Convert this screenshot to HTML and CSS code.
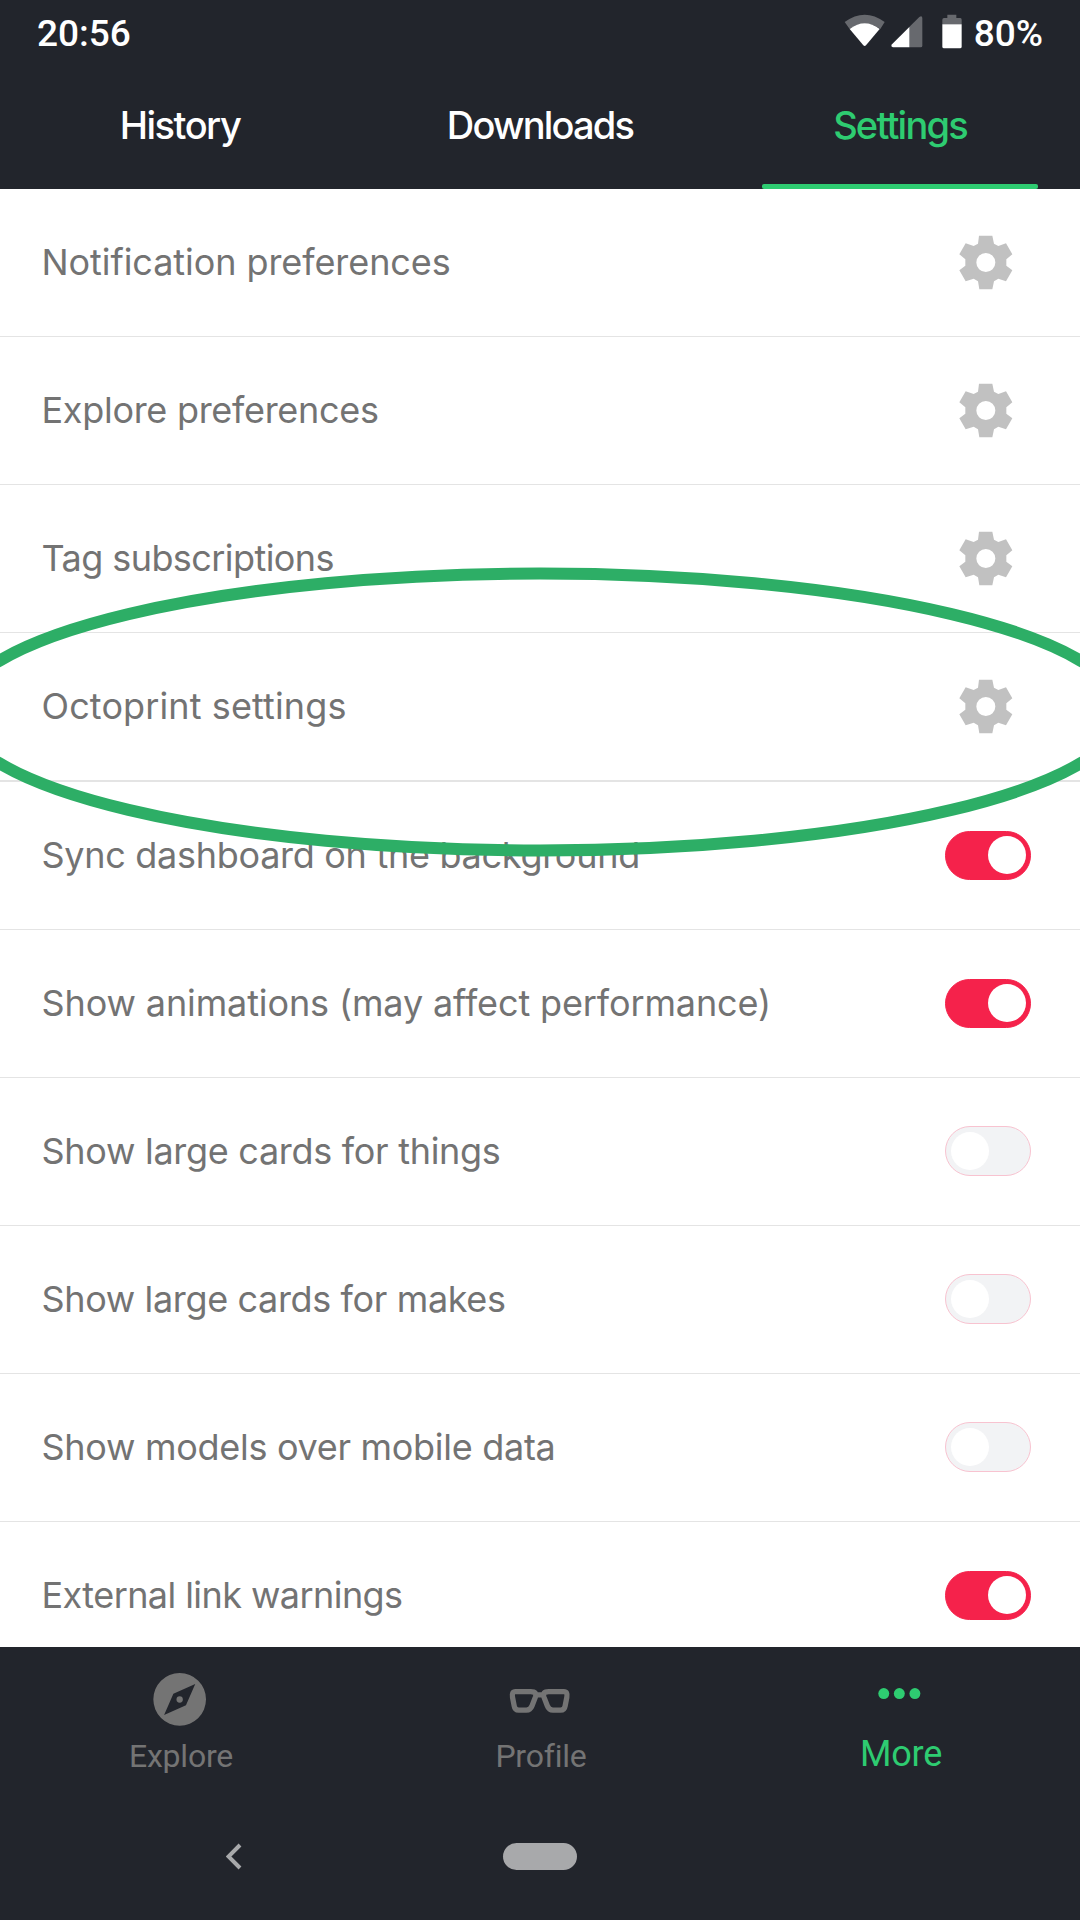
FILE: index.html
```html
<!DOCTYPE html>
<html lang="en">
<head>
<meta charset="utf-8">
<title>Settings</title>
<link rel="stylesheet" href="styles.css">
</head>
<body>
<svg class="defs" aria-hidden="true">
  <symbol id="gear" viewBox="0 0 162 165">
    <path fill-rule="evenodd" d="M60 2h40l5 24 13 7 23-8 19 33-18 15v19l18 14-19 33-23-8-13 8-5 24H61l-4-24-13-8-24 8-19-33 18-14V73L1 58l19-33 24 8 13-7zM80.500 54a28.500 28.500 0 1 0 0 57a28.500 28.500 0 1 0 0-57z"/>
  </symbol>
</svg>
<div class="screen">
  <header class="top">
    <div class="status">
      <span class="clock">20:56</span>
      <svg class="status-icons" viewBox="0 0 360 105">
        <path fill="#67696e" d="M2 24Q62-20 122 24L109 45Q62 12 17 45z"/>
        <path fill="#fff" d="M17 45Q62 10 107 45L66 94q-4 4-8 0z"/>
        <path fill="#67696e" d="M195 40l31-31q8-6 9 3v83q0 5-5 5h-35z"/>
        <path fill="#fff" d="M196 39v61h-49q-8-2-3-9z"/>
        <path fill="#67696e" d="M310 2h27v10h12q4 0 4 5v14h-58V17q0-5 5-5h10z"/>
        <path fill="#fff" d="M295 31h58v67q0 5-5 5h-48q-5 0-5-5z"/>
      </svg>
      <span class="battery">80%</span>
    </div>
    <nav class="tabs">
      <a class="tab history">History</a>
      <a class="tab">Downloads</a>
      <a class="tab active">Settings</a>
    </nav>
  </header>
  <main class="list">
    <div class="row"><span class="t1">Notification preferences</span><svg class="gear"><use href="#gear"/></svg></div>
    <div class="row"><span class="t3">Explore preferences</span><svg class="gear"><use href="#gear"/></svg></div>
    <div class="row"><span class="t6">Tag subscriptions</span><svg class="gear"><use href="#gear"/></svg></div>
    <div class="row section-end"><span class="w1">Octoprint settings</span><svg class="gear"><use href="#gear"/></svg></div>
    <div class="row"><span class="t3">Sync dashboard on the background</span><i class="switch on"></i></div>
    <div class="row"><span class="t2">Show animations (may affect performance)</span><i class="switch on"></i></div>
    <div class="row"><span class="t3">Show large cards for things</span><i class="switch"></i></div>
    <div class="row"><span class="t4">Show large cards for makes</span><i class="switch"></i></div>
    <div class="row"><span class="t3">Show models over mobile data</span><i class="switch"></i></div>
    <div class="row"><span class="t6">External link warnings</span><i class="switch on"></i></div>
    <svg class="highlight" viewBox="0 0 1080 300"><ellipse cx="540" cy="150" rx="582" ry="138.500"/></svg>
  </main>
  <footer class="bottom">
    <nav class="menu">
      <a class="item">
        <svg class="icon" viewBox="0 0 210 160">
          <path fill-rule="evenodd" d="M104 0a79.500 79.500 0 1 0 0 159a79.500 79.500 0 1 0 0-159zM151 33l-28 64-66 30 28-64z"/>
          <circle cx="104" cy="80" r="9.500"/>
        </svg>
        <span>Explore</span>
      </a>
      <a class="item">
        <svg class="icon outline" viewBox="0 0 210 160">
          <path d="M31 56h46q20 0 14 17l-10 26q-5 13-17 13H41q-12 0-14-13l-5-26q-3-17 9-17zM177 56h-46q-20 0-14 17l10 26q5 13 17 13h23q12 0 14-13l5-26q3-17-9-17zM93 66h22"/>
        </svg>
        <span>Profile</span>
      </a>
      <a class="item current">
        <svg class="icon" viewBox="0 0 210 160">
          <circle cx="56" cy="62" r="16.500"/><circle cx="103" cy="62" r="16.500"/><circle cx="150" cy="62" r="16.500"/>
        </svg>
        <span>More</span>
      </a>
    </nav>
    <div class="system">
      <svg class="back" viewBox="0 0 16 27"><path d="M14 2 2.500 13.500 14 25"/></svg>
      <i class="home"></i>
    </div>
  </footer>
</div>
</body>
</html>
```
FILE: styles.css
```css
* { box-sizing: border-box; }
body { margin: 0; background: #fff; }
.defs { position: absolute; width: 0; height: 0; }
.screen {
  display: flex;
  flex-direction: column;
  width: 1080px;
  height: 1920px;
  overflow: hidden;
  font-family: Inter, "Open Sans", sans-serif;
}

/* Header */
.top {
  flex: none;
  display: flex;
  flex-direction: column;
  height: 189px;
  background: #22252c;
  color: #fff;
}
.status {
  display: flex;
  align-items: center;
  height: 66px;
  padding: 0 37px;
  font: 500 37px/1 Roboto, sans-serif;
}
.clock { flex: 1; }
.status-icons { width: 120px; height: 35px; margin: 0 10px 3px 0; }
.tabs {
  flex: 1;
  display: grid;
  grid-template-columns: repeat(3, 1fr);
}
.tab {
  display: flex;
  flex-direction: column;
  align-items: center;
  justify-content: space-between;
  padding-top: 36px;
  font-size: 38px;
  font-weight: 500;
  line-height: 46px;
  letter-spacing: -1.8px;
}
.tab.history { letter-spacing: -1.5px; }
.tab.active { color: #2ecc71; }
.tab.active::after {
  content: "";
  width: 276px;
  height: 5px;
  border-radius: 2px;
  background: #2ecc71;
}

/* Settings list */
.list {
  position: relative;
  flex: 1;
  min-height: 0;
  overflow: hidden;
}
.row {
  display: flex;
  align-items: center;
  justify-content: space-between;
  height: 148px;
  padding: 0 49px 1px 41.5px;
  border-bottom: 1px solid #e4e4e4;
  color: #737373;
  font-size: 36px;
  line-height: 44px;
}
.row.section-end { height: 149px; border-bottom-width: 2px; }
.w1 { letter-spacing: .12px; }
.t1 { letter-spacing: -.07px; }
.t2 { letter-spacing: -.12px; }
.t3 { letter-spacing: -.29px; }
.t4 { letter-spacing: -.36px; }
.t6 { letter-spacing: -.57px; }
.gear { width: 54px; height: 55px; margin-right: 18px; fill: #c1c1c1; }
.switch {
  display: flex;
  align-items: center;
  width: 86px;
  height: 50px;
  padding: 0 5px;
  border: 1px solid #f8c3d0;
  border-radius: 25px;
  background: #f2f3f5;
}
.switch::before {
  content: "";
  width: 38px;
  height: 38px;
  border-radius: 50%;
  background: #fff;
}
.switch.on {
  justify-content: flex-end;
  height: 49px;
  padding-right: 4px;
  border-color: #f5224b;
  background: #f5224b;
}
.highlight {
  position: absolute;
  top: 372.500px;
  left: 0;
  width: 1080px;
  height: 300px;
  fill: none;
  stroke: #2dae66;
  stroke-width: 12px;
}

/* Bottom navigation */
.bottom { flex: none; height: 273px; background: #22252c; }
.menu {
  display: grid;
  grid-template-columns: repeat(3, 1fr);
  height: 147px;
  padding-top: 26px;
}
.item {
  display: flex;
  flex-direction: column;
  align-items: center;
  color: #747474;
  font: 400 32px/38px Roboto, sans-serif;
}
.item span { padding-left: 2px; letter-spacing: -.2px; }
.icon { width: 70px; height: 53px; margin-bottom: 11px; fill: currentColor; }
.icon.outline { fill: none; stroke: currentColor; stroke-width: 16px; }
.item.current { color: #2ecc71; font-size: 36px; line-height: 34px; }
.system {
  display: grid;
  grid-template-columns: 1fr 74px 1fr;
  align-items: center;
  height: 126px;
  padding-bottom: 1px;
}
.back {
  width: 16px;
  height: 27px;
  margin-left: 225.500px;
  fill: none;
  stroke: #a8a9ab;
  stroke-width: 4px;
}
.home { height: 27px; border-radius: 14px; background: #a8a9ab; }
```
